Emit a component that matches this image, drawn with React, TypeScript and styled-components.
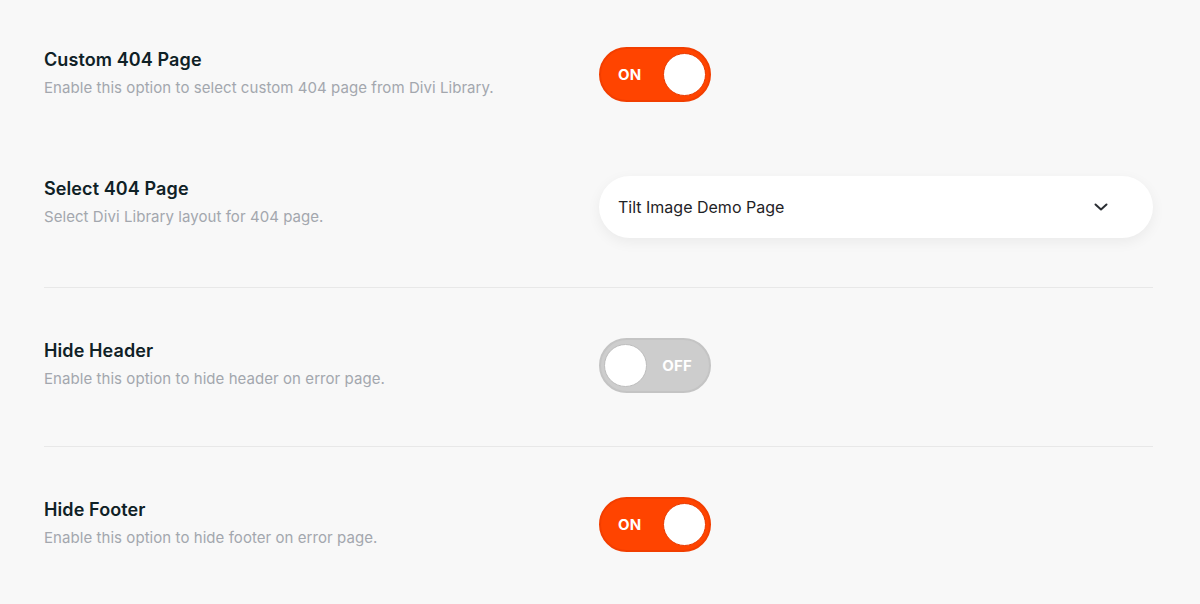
import styled, { createGlobalStyle } from "styled-components";

const GlobalStyle = createGlobalStyle`
  html, body {
    margin: 0;
    padding: 0;
    background: #f8f8f8;
  }
  body {
    font-family: Inter, "Noto Sans", "Liberation Sans", sans-serif;
    -webkit-font-smoothing: antialiased;
  }
`;

const Page = styled.div({
  width: "1200px",
  height: "604px",
  boxSizing: "border-box",
  padding: "0 47px 0 44px",
  background: "#f8f8f8",
  overflow: "hidden",
});

const Section = styled.section<{ $top: number; $bottom: number; $divider?: boolean }>((props) => ({
  display: "flex",
  flexDirection: "column",
  gap: "74px",
  padding: `${props.$top}px 0 ${props.$bottom}px`,
  borderBottom: props.$divider ? "1px solid #e8e8e8" : "none",
}));

const Row = styled.div({
  display: "grid",
  gridTemplateColumns: "555px 1fr",
  alignItems: "start",
});

const Info = styled.div({
  display: "flex",
  flexDirection: "column",
  gap: "6px",
  paddingTop: "2px",
});

const Title = styled.div({
  fontSize: "18px",
  lineHeight: "22px",
  fontWeight: 600,
  color: "#0f2126",
  letterSpacing: "0.1px",
});

const Description = styled.div({
  fontSize: "15px",
  lineHeight: "22px",
  fontWeight: 400,
  color: "#a3a7ae",
  letterSpacing: "0.06px",
});

const ToggleTrack = styled.div<{ $on: boolean }>((props) => ({
  width: "112px",
  height: "55px",
  boxSizing: "border-box",
  borderRadius: "28px",
  border: `2px solid ${props.$on ? "#f23e00" : "#c4c4c4"}`,
  background: props.$on ? "#ff4400" : "#cdcdcd",
  display: "flex",
  flexDirection: props.$on ? "row" : "row-reverse",
  alignItems: "center",
  justifyContent: "space-between",
  paddingLeft: props.$on ? "17px" : "3px",
  paddingRight: props.$on ? "3px" : "17px",
}));

const ToggleLabel = styled.span({
  color: "#ffffff",
  fontSize: "15px",
  fontWeight: 700,
  letterSpacing: "0.2px",
});

const Knob = styled.span<{ $on: boolean }>((props) => ({
  width: "43px",
  height: "43px",
  boxSizing: "border-box",
  borderRadius: "50%",
  background: "#ffffff",
  border: `1px solid ${props.$on ? "#e83a00" : "#bdbdbd"}`,
}));

const Select = styled.div({
  height: "62px",
  boxSizing: "border-box",
  borderRadius: "31px",
  background: "#ffffff",
  boxShadow: "0 4px 14px rgba(0, 0, 0, 0.06)",
  display: "flex",
  alignItems: "center",
  justifyContent: "space-between",
  padding: "0 45px 0 19px",
  fontSize: "16px",
  color: "#1f2326",
});

const Toggle = ({ on }: { on: boolean }) => (
  <ToggleTrack $on={on}>
    <ToggleLabel>{on ? "ON" : "OFF"}</ToggleLabel>
    <Knob $on={on} />
  </ToggleTrack>
);

const Chevron = () => (
  <svg width="14" height="8" viewBox="0 0 14 8" fill="none">
    <path d="M1.5 1.5 L7 6.5 L12.5 1.5" stroke="#2a2e33" strokeWidth="2" strokeLinecap="round" strokeLinejoin="round" />
  </svg>
);

interface OptionProps {
  title: string;
  description: string;
  children: React.ReactNode;
}

const Option = ({ title, description, children }: OptionProps) => (
  <Row>
    <Info>
      <Title>{title}</Title>
      <Description>{description}</Description>
    </Info>
    <div>{children}</div>
  </Row>
);

export default function App() {
  return (
    <Page>
      <GlobalStyle />
      <Section $top={47} $bottom={49} $divider>
        <Option title="Custom 404 Page" description="Enable this option to select custom 404 page from Divi Library.">
          <Toggle on />
        </Option>
        <Option title="Select 404 Page" description="Select Divi Library layout for 404 page.">
          <Select>
            <span>Tilt Image Demo Page</span>
            <Chevron />
          </Select>
        </Option>
      </Section>
      <Section $top={50} $bottom={53} $divider>
        <Option title="Hide Header" description="Enable this option to hide header on error page.">
          <Toggle on={false} />
        </Option>
      </Section>
      <Section $top={50} $bottom={50}>
        <Option title="Hide Footer" description="Enable this option to hide footer on error page.">
          <Toggle on />
        </Option>
      </Section>
    </Page>
  );
}
